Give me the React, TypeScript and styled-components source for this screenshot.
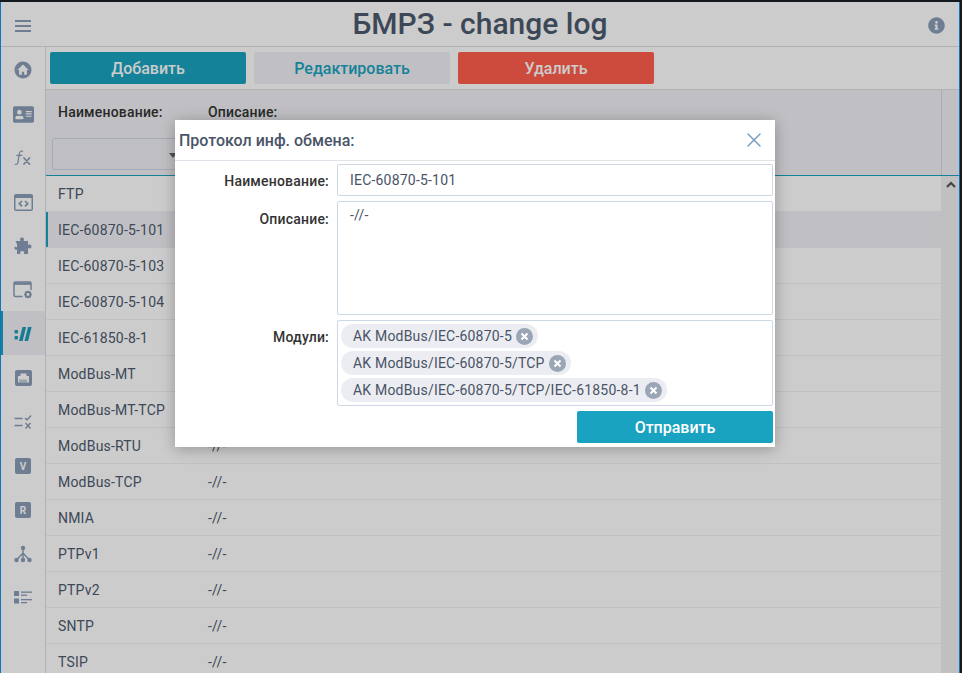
import React from 'react';
import styled, { createGlobalStyle } from 'styled-components';
import { FaAddressCard, FaInfoCircle } from 'react-icons/fa';
import { X } from 'lucide-react';

const GlobalStyle = createGlobalStyle`
  html, body {
    margin: 0;
    height: 100%;
    overflow: hidden;
    background: #15181c;
  }
  #root {
    height: 100%;
  }
  * {
    box-sizing: border-box;
  }
`;

const ICON = '#8a9db6';
const TEAL = '#1aa3c0';
const TEXT = '#4d5a6e';

const Screen = styled.div`
  height: 100%;
  padding: 2px 1px 0 0;
  font-family: Roboto, 'Liberation Sans', sans-serif;
  font-size: 14px;
  letter-spacing: 0.2px;
  color: ${TEXT};
`;

const Frame = styled.div`
  position: relative;
  display: flex;
  flex-direction: column;
  width: 960px;
  height: 671px;
  overflow: hidden;
  background: #fff;
  border-left: 1px solid #0f75bd;
  border-right: 1px solid #0f75bd;
`;

const Header = styled.header`
  position: relative;
  display: flex;
  flex: none;
  align-items: center;
  justify-content: space-between;
  height: 45px;
  padding: 3px 14px 0;
  border-bottom: 1px solid #dedede;
`;

const Title = styled.h1`
  position: absolute;
  top: 0;
  left: 0;
  right: 0;
  margin: 0;
  font-size: 30px;
  font-weight: 500;
  line-height: 44px;
  letter-spacing: 0;
  text-align: center;
  color: #4c596d;
`;

const MenuButton = styled.div`
  display: flex;
  flex-direction: column;
  gap: 3px;
  width: 16px;

  span {
    height: 2px;
    background: ${ICON};
  }
`;

const InfoButton = styled.div`
  display: flex;
  color: ${ICON};
`;

const Layout = styled.div`
  display: flex;
  flex: 1;
  min-height: 0;
`;

const Sidebar = styled.nav`
  flex: none;
  width: 45px;
  border-right: 1px solid #dedede;
`;

const NavItem = styled.div<{ $active?: boolean }>`
  display: flex;
  align-items: center;
  justify-content: center;
  height: 44px;
  padding-top: 2px;
  color: ${(p) => (p.$active ? '#1a9bb8' : ICON)};
  background: ${(p) => (p.$active ? '#f0f1f5' : 'transparent')};
  box-shadow: ${(p) => (p.$active ? `inset 2px 0 0 ${TEAL}` : 'none')};
`;

const LetterBadge = styled.span`
  display: flex;
  align-items: center;
  justify-content: center;
  width: 16px;
  height: 16px;
  border-radius: 2px;
  font-size: 10px;
  font-weight: 700;
  letter-spacing: 0;
  color: #fff;
  background: ${ICON};
`;

const Main = styled.main`
  display: flex;
  flex: 1;
  flex-direction: column;
  min-width: 0;
`;

const Toolbar = styled.div`
  display: flex;
  flex: none;
  gap: 8px;
  height: 43px;
  padding: 5px 4px;
  border-bottom: 1px solid #dedede;
`;

const ToolButton = styled.button<{ $kind: 'primary' | 'plain' | 'danger' }>`
  width: 196px;
  height: 32px;
  padding: 0;
  border: 0;
  border-radius: 2px;
  font-family: inherit;
  font-size: 16px;
  font-weight: 500;
  color: ${(p) => (p.$kind === 'plain' ? TEAL : '#fff')};
  background: ${(p) => (p.$kind === 'primary' ? TEAL : p.$kind === 'danger' ? '#ff5e4c' : '#f0f1f5')};
`;

const TableHead = styled.div`
  display: grid;
  flex: none;
  grid-template-columns: 150px 1fr 18px;
  height: 86px;
  background: #f0f1f5;
  border-bottom: 1px solid ${TEAL};
`;

const HeadCell = styled.div`
  padding: 13px 6px 0;
  line-height: 18px;
  font-weight: 500;
  color: #333;

  & > span {
    padding-left: 6px;
  }
`;

const Gutter = styled.div`
  border-left: 1px solid #d6d8de;
`;

const FilterBox = styled.div`
  position: relative;
  height: 32px;
  margin-top: 17px;
  border: 1px solid #ccd6e4;
  border-radius: 2px;

  &::after {
    content: '';
    position: absolute;
    top: 14px;
    right: 12px;
    border-left: 4px solid transparent;
    border-right: 4px solid transparent;
    border-top: 5px solid #666;
  }
`;

const TableBody = styled.div`
  display: flex;
  flex: 1;
  min-height: 0;
`;

const Rows = styled.div`
  flex: 1;
  overflow: hidden;
`;

const Row = styled.div<{ $selected?: boolean }>`
  display: grid;
  grid-template-columns: 150px 1fr;
  align-items: center;
  height: 36px;
  background: ${(p) => (p.$selected ? '#f0f1f5' : '#fff')};
  border-bottom: 1px solid #eff0f2;
  box-shadow: ${(p) => (p.$selected ? `inset 2px 0 0 ${TEAL}` : 'none')};
`;

const RowCell = styled.div`
  padding-left: 12px;
`;

const Scrollbar = styled.div`
  display: flex;
  flex: none;
  justify-content: center;
  width: 18px;
  padding-top: 5px;
  color: #505050;
  background: #f1f1f1;
  border-left: 1px solid #f1f1f1;
`;

const Overlay = styled.div`
  position: absolute;
  inset: 0;
  background: rgba(0, 0, 0, 0.2);
`;

const Modal = styled.section`
  position: absolute;
  top: 118px;
  left: 174px;
  width: 600px;
  height: 327px;
  background: #fff;
  box-shadow: 0 2px 14px rgba(0, 0, 0, 0.28);
`;

const ModalHead = styled.div`
  display: flex;
  align-items: center;
  justify-content: space-between;
  height: 41px;
  padding: 0 9px 0 4px;
  border-bottom: 1px solid #dfe4ea;
`;

const ModalTitle = styled.h2`
  margin: 0;
  font-size: 16px;
  font-weight: 500;
  letter-spacing: 0;
  color: #4a5568;
`;

const CloseButton = styled.div`
  display: flex;
  color: #7b9cc0;
`;

const Form = styled.form`
  display: grid;
  grid-template-columns: 154px 436px;
  grid-template-rows: 32px 114px 86px 32px;
  column-gap: 8px;
  row-gap: 5px;
  padding-top: 3px;
`;

const Label = styled.label<{ $lineHeight?: number }>`
  line-height: ${(p) => p.$lineHeight ?? 34}px;
  font-weight: 500;
  text-align: right;
  color: #333;
`;

const TextField = styled.div<{ $tall?: boolean }>`
  padding: 0 12px;
  line-height: ${(p) => (p.$tall ? '27px' : '30px')};
  color: #495365;
  border: 1px solid #ccd8e6;
  border-radius: 2px;
`;

const ChipField = styled.div`
  display: flex;
  flex-direction: column;
  align-items: flex-start;
  gap: 3px;
  padding: 3px;
  border: 1px solid #ccd8e6;
  border-radius: 2px;
`;

const Chip = styled.span`
  display: flex;
  align-items: center;
  gap: 4px;
  height: 24px;
  padding: 0 5px 0 12px;
  color: #495365;
  background: #ebedf2;
  border-radius: 12px;
`;

const ChipRemove = styled.svg`
  flex: none;
  width: 17px;
  height: 17px;
`;

const SubmitRow = styled.div`
  display: flex;
  grid-column: 2;
  justify-content: flex-end;
`;

const SubmitButton = styled.button`
  width: 196px;
  height: 32px;
  padding: 0;
  border: 0;
  border-radius: 2px;
  font-family: inherit;
  font-size: 16px;
  font-weight: 500;
  color: #fff;
  background: ${TEAL};
`;

const HomeIcon = () => (
  <svg width="18" height="18" viewBox="0 0 18 18">
    <circle cx="9" cy="9" r="8.5" fill="currentColor" />
    <path d="M9 3.6 3.4 9h1.7v4.8h2.8v-3h2.2v3h2.8V9h1.7z" fill="#fff" />
  </svg>
);

const FxIcon = () => (
  <svg width="18" height="18" viewBox="0 0 18 18" fill="none" stroke="currentColor" strokeLinecap="round">
    <path d="M8.6 2.2c-1.8-.5-2.8.3-3.1 2L4 13.2c-.3 1.8-1.2 2.6-2.8 2.2" strokeWidth="1.2" />
    <path d="M2.8 6.4h5" strokeWidth="1.2" />
    <path d="m10 9 5.5 6M15.5 9 10 15" strokeWidth="1.7" />
  </svg>
);

const CodeWindowIcon = () => (
  <svg width="19" height="17" viewBox="0 0 19 17">
    <rect width="19" height="17" rx="2" fill="currentColor" />
    <rect x="1.5" y="4" width="16" height="11.5" fill="#fff" />
    <path d="M8 7 5.3 9.7 8 12.4M11 7l2.7 2.7L11 12.4" fill="none" stroke="currentColor" strokeWidth="1.7" />
  </svg>
);

const PuzzleIcon = () => (
  <svg width="19" height="18" viewBox="0 0 19 18" fill="currentColor">
    <path d="M1.5 4h5C5.5 2.5 6 .5 8 .5s2.5 2 1.500 3.500H14v4c1.500-1 3.500-.5 3.500 1.500S15.500 12 14 11v6H9.800c1-1.500.2-3-1.600-3s-2.700 1.500-1.700 3H3v-4.500c-1 .7-2.500.2-2.500-1.500S2 9.800 3 10.500V7z" />
  </svg>
);

const WindowGearIcon = () => (
  <svg width="20" height="18" viewBox="0 0 20 18" fill="none">
    <path d="M9.5 15.5H2.2A1.2 1.2 0 0 1 1 14.3V2.200A1.2 1.2 0 0 1 2.2 1h14.600A1.2 1.2 0 0 1 18 2.200V9" stroke="currentColor" strokeWidth="1.5" />
    <path d="M1 2.600h17" stroke="currentColor" strokeWidth="2.5" />
    <circle cx="15" cy="13.5" r="2.4" stroke="currentColor" strokeWidth="2" />
    <path d="M15 9.700v1.400M15 15.900v1.400M11.200 13.500h1.400M17.400 13.500h1.400M12.300 10.800l1 1M16.700 15.200l1 1M17.700 10.800l-1 1M13.300 15.200l-1 1" stroke="currentColor" strokeWidth="1.3" />
  </svg>
);

const ProtocolIcon = () => (
  <svg width="18" height="14" viewBox="0 0 18 14" fill="currentColor">
    <rect x="0.5" y="3" width="3.5" height="3.5" rx="1" />
    <rect x="0.5" y="9" width="3.5" height="3.5" rx="1" />
    <path d="M8.500 0h3.600L8.600 14H5z" />
    <path d="M14 0h3.600l-3.500 14h-3.600z" />
  </svg>
);

const EthernetIcon = () => (
  <svg width="17" height="16" viewBox="0 0 17 16">
    <rect width="17" height="16" rx="2" fill="currentColor" />
    <path d="M5.500 3.500h6V6H14v6.500H3V6h2.500z" fill="#fff" />
    <path d="M5 9.500v3M7 9.500v3M9 9.500v3M11 9.500v3" stroke={ICON} strokeWidth="1" />
  </svg>
);

const CheckListIcon = () => (
  <svg width="18" height="14" viewBox="0 0 18 14" fill="none" stroke="currentColor" strokeWidth="1.5">
    <path d="M.5 3.500h8M.5 10.500h8" />
    <path d="m11 3 2 2 4-4.500" />
    <path d="m11.500 8 5 5.500M16.500 8l-5 5.500" />
  </svg>
);

const TreeIcon = () => (
  <svg width="18" height="18" viewBox="0 0 18 18" fill="none" stroke="currentColor">
    <path d="M9 3v12M9 8 3 14.500M9 8l6 6.500" strokeWidth="1.4" />
    <circle cx="9" cy="3" r="2.2" fill="currentColor" stroke="none" />
    <circle cx="2.5" cy="15" r="2.2" fill="currentColor" stroke="none" />
    <circle cx="9" cy="15" r="2.2" fill="currentColor" stroke="none" />
    <circle cx="15.5" cy="15" r="2.2" fill="currentColor" stroke="none" />
  </svg>
);

const DetailsIcon = () => (
  <svg width="18" height="14" viewBox="0 0 18 14" fill="currentColor">
    <rect width="5" height="5" />
    <rect y="7.5" width="5" height="5" />
    <rect x="7" y="0.5" width="11" height="1.3" />
    <rect x="7" y="3.5" width="6" height="1.3" />
    <rect x="7" y="8" width="11" height="1.3" />
    <rect x="7" y="11" width="6" height="1.3" />
  </svg>
);

const RemoveIcon = () => (
  <ChipRemove viewBox="0 0 17 17">
    <circle cx="8.5" cy="8.5" r="8.5" fill="#9aa5b5" />
    <path d="m5.500 5.500 6 6M11.500 5.500l-6 6" stroke="#fff" strokeWidth="2" />
  </ChipRemove>
);

const protocols = [
  'FTP',
  'IEC-60870-5-101',
  'IEC-60870-5-103',
  'IEC-60870-5-104',
  'IEC-61850-8-1',
  'ModBus-MT',
  'ModBus-MT-TCP',
  'ModBus-RTU',
  'ModBus-TCP',
  'NMIA',
  'PTPv1',
  'PTPv2',
  'SNTP',
  'TSIP',
];

const modules = ['AK ModBus/IEC-60870-5', 'AK ModBus/IEC-60870-5/TCP', 'AK ModBus/IEC-60870-5/TCP/IEC-61850-8-1'];

const navIcons = [
  <HomeIcon />,
  <FaAddressCard size={21} />,
  <FxIcon />,
  <CodeWindowIcon />,
  <PuzzleIcon />,
  <WindowGearIcon />,
  <ProtocolIcon />,
  <EthernetIcon />,
  <CheckListIcon />,
  <LetterBadge>V</LetterBadge>,
  <LetterBadge>R</LetterBadge>,
  <TreeIcon />,
  <DetailsIcon />,
];

const App = () => (
  <Screen>
    <GlobalStyle />
    <Frame>
      <Header>
        <Title>БМРЗ - change log</Title>
        <MenuButton>
          <span />
          <span />
          <span />
        </MenuButton>
        <InfoButton>
          <FaInfoCircle size={17} />
        </InfoButton>
      </Header>
      <Layout>
        <Sidebar>
          {navIcons.map((icon, i) => (
            <NavItem key={i} $active={i === 6}>
              {icon}
            </NavItem>
          ))}
        </Sidebar>
        <Main>
          <Toolbar>
            <ToolButton $kind="primary">Добавить</ToolButton>
            <ToolButton $kind="plain">Редактировать</ToolButton>
            <ToolButton $kind="danger">Удалить</ToolButton>
          </Toolbar>
          <TableHead>
            <HeadCell>
              <span>Наименование:</span>
              <FilterBox />
            </HeadCell>
            <HeadCell>
              <span>Описание:</span>
            </HeadCell>
            <Gutter />
          </TableHead>
          <TableBody>
            <Rows>
              {protocols.map((name, i) => (
                <Row key={name} $selected={i === 1}>
                  <RowCell>{name}</RowCell>
                  <RowCell>-//-</RowCell>
                </Row>
              ))}
            </Rows>
            <Scrollbar>
              <svg width="10" height="7" viewBox="0 0 10 7" fill="none" stroke="currentColor" strokeWidth="2">
                <path d="m1 6 4-4 4 4" />
              </svg>
            </Scrollbar>
          </TableBody>
        </Main>
      </Layout>
      <Overlay>
        <Modal>
          <ModalHead>
            <ModalTitle>Протокол инф. обмена:</ModalTitle>
            <CloseButton>
              <X size={24} strokeWidth={1.5} />
            </CloseButton>
          </ModalHead>
          <Form>
            <Label>Наименование:</Label>
            <TextField>IEC-60870-5-101</TextField>
            <Label $lineHeight={36}>Описание:</Label>
            <TextField $tall>-//-</TextField>
            <Label>Модули:</Label>
            <ChipField>
              {modules.map((m) => (
                <Chip key={m}>
                  {m}
                  <RemoveIcon />
                </Chip>
              ))}
            </ChipField>
            <SubmitRow>
              <SubmitButton type="button">Отправить</SubmitButton>
            </SubmitRow>
          </Form>
        </Modal>
      </Overlay>
    </Frame>
  </Screen>
);

export default App;
